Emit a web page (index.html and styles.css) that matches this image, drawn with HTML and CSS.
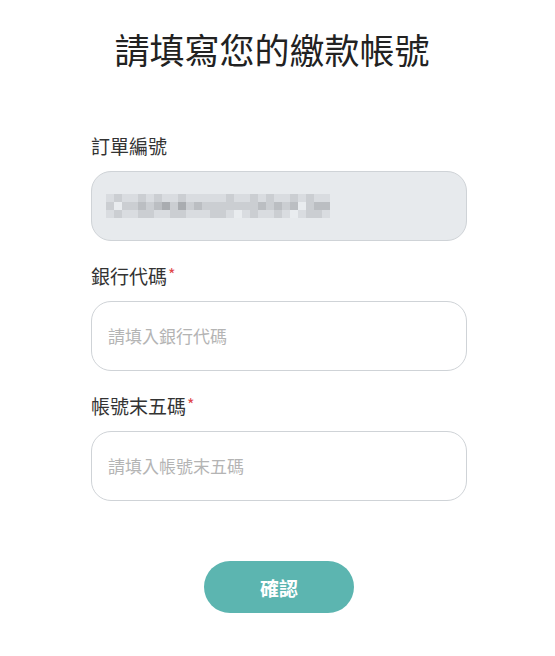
FILE: index.html
```html
<!DOCTYPE html>
<html lang="zh-Hant">
<head>
  <meta charset="UTF-8">
  <meta name="viewport" content="width=device-width, initial-scale=1">
  <title>請填寫您的繳款帳號</title>
  <link rel="stylesheet" href="styles.css">
</head>
<body>
  <h1 class="page-title">請填寫您的繳款帳號</h1>
  <form class="account-form" onsubmit="return false;">
    <div class="field">
      <label class="field-label">訂單編號</label>
      <div class="field-input field-input--disabled">
        <div id="masked" class="masked"></div>
      </div>
    </div>
    <div class="field">
      <label class="field-label" for="bank">銀行代碼<span class="required">*</span></label>
      <input id="bank" class="field-input" type="text" placeholder="請填入銀行代碼">
    </div>
    <div class="field">
      <label class="field-label" for="last5">帳號末五碼<span class="required">*</span></label>
      <input id="last5" class="field-input" type="text" placeholder="請填入帳號末五碼">
    </div>
    <button class="submit" type="submit">確認</button>
  </form>

  <script>
    // pixelated order number
    const rows = [
      '1211212112111112112121121211',
      '2022323424232222222323230233',
      '1211221122111221012112101221'
    ];
    const masked = document.getElementById('masked');
    rows.forEach(row => {
      const line = document.createElement('div');
      line.className = 'masked-row';
      row.split('').forEach(v => {
        const px = document.createElement('span');
        px.className = 'px px-' + v;
        line.appendChild(px);
      });
      masked.appendChild(line);
    });
  </script>
</body>
</html>
```

FILE: styles.css
```css
* {
  box-sizing: border-box;
  margin: 0;
  padding: 0;
}

body {
  background: #fff;
  font-family: "Noto Sans CJK TC", "Noto Sans", sans-serif;
  color: #333;
}

.page-title {
  margin-top: 28px;
  padding-right: 11px;
  text-align: center;
  font-size: 35px;
  line-height: 42px;
  font-weight: 400;
  color: #222;
}

.account-form {
  width: 376px;
  margin: 63px 0 0 91px;
  display: flex;
  flex-direction: column;
}

.field {
  display: flex;
  flex-direction: column;
  margin-bottom: 22px;
}

.field-label {
  font-size: 19px;
  line-height: 26px;
  margin-bottom: 12px;
  font-weight: 400;
  color: #333;
}

.required {
  color: #e0474c;
  font-size: 16px;
  line-height: 1;
  vertical-align: 3px;
  margin-left: 1px;
}

.field-input {
  height: 70px;
  width: 100%;
  border: 1px solid #cfd3d7;
  border-radius: 20px;
  padding: 0 16px 2px;
  font-family: inherit;
  font-size: 17px;
  color: #333;
  background: #fff;
  outline: none;
}

.field-input::placeholder {
  color: #b4b4b4;
}

.field-input--disabled {
  background: #e7eaed;
  display: flex;
  align-items: center;
  padding: 0 0 0 14px;
}

.masked {
  display: flex;
  flex-direction: column;
}

.masked-row {
  display: flex;
  height: 8px;
}

.px {
  width: 8px;
  height: 8px;
}

.px-0 { background: #e9ecef; }
.px-1 { background: #d9dce0; }
.px-2 { background: #cbced2; }
.px-3 { background: #bbbec2; }
.px-4 { background: #a9acb0; }

.submit {
  align-self: center;
  margin-top: 38px;
  width: 150px;
  height: 52px;
  border: none;
  border-radius: 26px;
  background: #5cb5b0;
  color: #fff;
  font-family: inherit;
  font-size: 19px;
  font-weight: 700;
  cursor: pointer;
}
```
